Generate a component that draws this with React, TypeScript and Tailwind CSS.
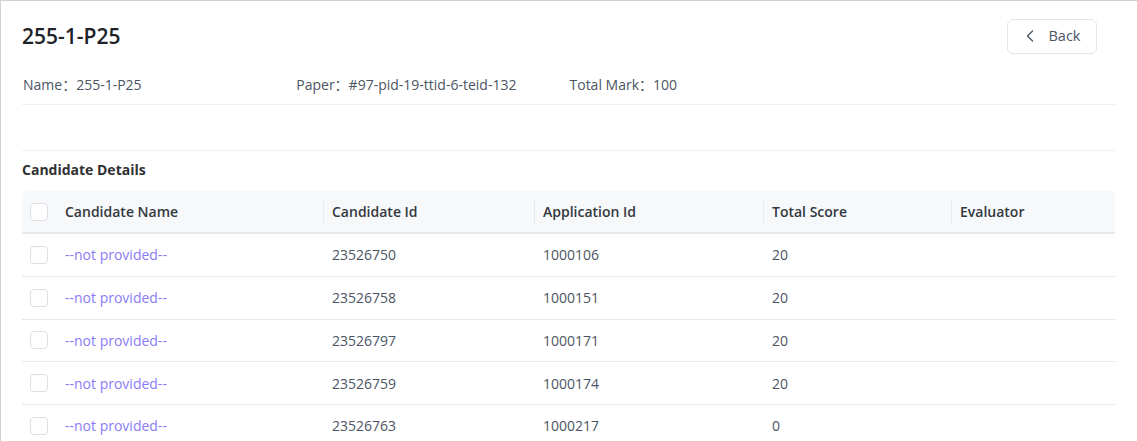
import React from 'react'
import { ChevronLeft } from 'lucide-react'

const rows = [
  { name: '--not provided--', candidateId: '23526750', applicationId: '1000106', score: '20' },
  { name: '--not provided--', candidateId: '23526758', applicationId: '1000151', score: '20' },
  { name: '--not provided--', candidateId: '23526797', applicationId: '1000171', score: '20' },
  { name: '--not provided--', candidateId: '23526759', applicationId: '1000174', score: '20' },
  { name: '--not provided--', candidateId: '23526763', applicationId: '1000217', score: '0' },
]

const columns = [
  { title: 'Candidate Name', width: 'w-[267px]' },
  { title: 'Candidate Id', width: 'w-[211px]' },
  { title: 'Application Id', width: 'w-[229px]' },
  { title: 'Total Score', width: 'w-[188px]' },
  { title: 'Evaluator', width: 'w-[164px]' },
]

function Checkbox() {
  return <span className="block h-[18px] w-[18px] rounded-[4px] border border-[#dcdfe6] bg-white" />
}

export default function App() {
  return (
    <div className="h-[441px] w-full overflow-hidden border-l border-t border-[#d2d2d2] bg-white font-['Open_Sans','Noto_Sans_CJK_SC',sans-serif] text-[14px] text-[#4b5563]">
      <div className="pl-[21px] pr-[22px]">
        {/* Header */}
        <div className="flex items-center justify-between pt-[17px]">
          <h1 className="text-[21px] font-semibold leading-[36px] text-[#1f2329]">255-1-P25</h1>
          <button className="mr-[18px] flex h-[35px] w-[90px] items-center justify-center gap-[9px] rounded-[6px] border border-[#e3e6eb] bg-white text-[14.5px] text-[#4b5563]">
            <ChevronLeft size={20} strokeWidth={1.6} className="-ml-[4px] text-[#4b5563]" />
            <span>Back</span>
          </button>
        </div>

        {/* Info */}
        <div className="mt-[21px] grid grid-cols-4 border-b border-[#eff0f2] pb-[9px] leading-[20px]">
          <div className="pl-px">Name：255-1-P25</div>
          <div className="pl-[1px]">Paper：#97-pid-19-ttid-6-teid-132</div>
          <div className="pl-[1px]">Total Mark：100</div>
          <div />
        </div>
        <div className="mt-[45px] border-t border-[#eff0f2]" />

        {/* Candidates */}
        <h2 className="mt-[9px] text-[14px] font-bold leading-[20px] text-[#303133]">Candidate Details</h2>
        <div className="mt-[11px]">
          <div className="flex h-[43px] items-center rounded-t-[6px] border-b-2 border-[#e5e8ec] bg-[#f7f8fa] font-semibold text-[#333840]">
            <div className="flex w-[34px] justify-center">
              <Checkbox />
            </div>
            {columns.map((col, i) => (
              <div key={col.title} className={`${col.width} flex items-center`}>
                {i > 0 && <span className="h-[24px] w-px bg-[#e8eaee]" />}
                <span className={i > 0 ? 'pl-[8px]' : 'pl-[9px]'}>{col.title}</span>
              </div>
            ))}
          </div>
          {rows.map((row) => (
            <div key={row.candidateId} className="flex h-[42.75px] items-center border-b border-[#e5e8ec]">
              <div className="flex w-[34px] justify-center">
                <Checkbox />
              </div>
              <div className="w-[267px] pl-[9px] text-[#8a7cf6]">{row.name}</div>
              <div className="w-[211px] pl-[9px]">{row.candidateId}</div>
              <div className="w-[229px] pl-[9px]">{row.applicationId}</div>
              <div className="w-[188px] pl-[9px]">{row.score}</div>
              <div className="w-[164px] pl-[9px]" />
            </div>
          ))}
        </div>
      </div>
    </div>
  )
}
